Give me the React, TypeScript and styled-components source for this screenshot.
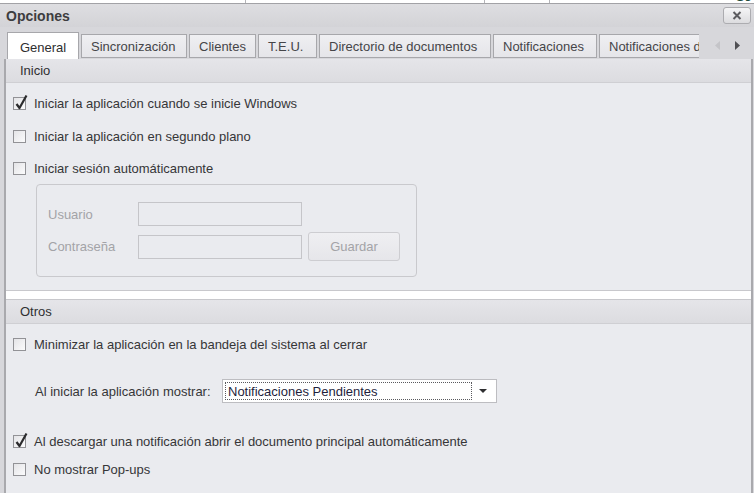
import React, { FC } from 'react'
import styled, { createGlobalStyle } from 'styled-components'

const GlobalStyle = createGlobalStyle`
  html, body {
    margin: 0;
    padding: 0;
    background: #ffffff;
  }
  body {
    font-family: "Liberation Sans", Arial, sans-serif;
    font-size: 13px;
    color: #383838;
  }
`

const Screen = styled.div`
  width: 754px;
  height: 493px;
  overflow: hidden;
  display: flex;
  flex-direction: column;
  background: #d7d7db;
`

const BackStrip = styled.div`
  height: 3px;
  display: flex;
  background: #ffffff;
  border-bottom: 1px solid #a2a2a6;
  overflow: hidden;
`

interface ICell {
    width?: number
}

const BackCell = styled.div<ICell>`
  width: ${(props) => (props.width ? `${props.width}px` : 'auto')};
  flex: ${(props) => (props.width ? 'none' : '1')};
  border-right: 1px solid #b4b4b8;
  &:last-child {
    border-right: none;
  }
`

const BackGlyph = styled.span`
  display: block;
  margin: -13px 0 0 187px;
  font: bold 17px "Liberation Serif", serif;
  color: #1d4a3b;
  line-height: 17px;
`

const TitleBar = styled.div`
  height: 23px;
  display: flex;
  align-items: center;
  justify-content: space-between;
  padding: 0 3px 0 6px;
  background: linear-gradient(#dedee1, #d3d3d7);
`

const Title = styled.span`
  font-weight: bold;
  font-size: 14px;
  color: #3d3d40;
`

const CloseButton = styled.div`
  width: 26px;
  height: 15px;
  border: 1px solid #acacb0;
  border-radius: 3px;
  background: linear-gradient(#f5f5f6, #dcdcdf);
  display: flex;
  align-items: center;
  justify-content: center;
`

const TabBar = styled.div`
  height: 32px;
  display: flex;
  align-items: flex-end;
  padding-left: 7px;
`

const TabList = styled.div`
  width: 692px;
  display: flex;
  align-items: flex-end;
  overflow: hidden;
`

interface ITab {
    active?: boolean,
    width: number
}

const Tab = styled.div<ITab>`
  flex: none;
  box-sizing: border-box;
  width: ${(props) => props.width}px;
  height: ${(props) => (props.active ? 27 : 24)}px;
  margin-left: ${(props) => (props.active ? 0 : 2)}px;
  margin-bottom: ${(props) => (props.active ? 0 : 1)}px;
  border: 1px solid #a7a7ab;
  border-bottom: ${(props) => (props.active ? 'none' : '1px solid #a7a7ab')};
  background: ${(props) => (props.active ? '#ffffff' : 'linear-gradient(#efeff2, #e5e5e9)')};
  color: ${(props) => (props.active ? '#2e2e30' : '#454548')};
  display: flex;
  align-items: center;
  justify-content: ${(props) => (props.active ? 'center' : 'flex-start')};
  padding-left: ${(props) => (props.active ? 0 : 9)}px;
  padding-top: ${(props) => (props.active ? 2 : 0)}px;
  white-space: nowrap;
  overflow: hidden;
`

const TabScroll = styled.div`
  flex: 1;
  height: 27px;
  display: flex;
  align-items: center;
  justify-content: space-around;
  padding: 0 6px 0 8px;
`

const Panel = styled.div`
  flex: 1;
  margin: 0 1px 0 4px;
  border-left: 2px solid #a9a9ad;
  border-right: 2px solid #a9a9ad;
  background: #eaebef;
  display: flex;
  flex-direction: column;
`

interface ISectionHeader {
    topBorder?: boolean
}

const SectionHeader = styled.div<ISectionHeader>`
  height: 23px;
  display: flex;
  align-items: center;
  padding-left: 14px;
  background: linear-gradient(#e5e5e9, #dcdce0);
  border-top: ${(props) => (props.topBorder ? '1px solid #c8c8cc' : 'none')};
  border-bottom: 1px solid #cfcfd3;
  color: #2f2f31;
`

interface ISectionBody {
    height?: number
}

const SectionBody = styled.div<ISectionBody>`
  display: flex;
  flex-direction: column;
  padding: 10px 0 0 7px;
  height: ${(props) => (props.height ? `${props.height - 10}px` : 'auto')};
  border-bottom: ${(props) => (props.height ? '1px solid #c8c8cc' : 'none')};
`

const Separator = styled.div`
  height: 8px;
  background: #ffffff;
`

interface IRow {
    marginTop?: number
}

const CheckRow = styled.label<IRow>`
  height: 20px;
  display: flex;
  align-items: center;
  gap: 8px;
  margin-top: ${(props) => props.marginTop || 0}px;
  color: #363638;
`

const Box = styled.span`
  width: 13px;
  height: 13px;
  box-sizing: border-box;
  border: 1px solid #929296;
  background: linear-gradient(135deg, #e4e4e7, #fbfbfc);
  position: relative;
`

const Tick = styled.svg`
  position: absolute;
  left: 0;
  top: -4px;
  overflow: visible;
`

const LoginBox = styled.div`
  width: 381px;
  height: 93px;
  box-sizing: border-box;
  margin: 6px 0 0 23px;
  border: 1px solid #c9c9cd;
  border-radius: 4px;
  padding: 17px 0 0 11px;
  display: flex;
  flex-direction: column;
  gap: 6px;
`

const FieldRow = styled.div`
  display: flex;
  align-items: center;
`

const FieldLabel = styled.span`
  width: 90px;
  color: #a3a3a7;
`

const Input = styled.div`
  width: 164px;
  height: 24px;
  box-sizing: border-box;
  border: 1px solid #c5c5c9;
  background: #eaebef;
`

const DisabledButton = styled.div`
  width: 92px;
  height: 29px;
  box-sizing: border-box;
  margin-left: 6px;
  border: 1px solid #cdcdd1;
  border-radius: 3px;
  background: linear-gradient(#efeff2, #e6e6ea);
  color: #a3a3a7;
  display: flex;
  align-items: center;
  justify-content: center;
`

const ComboRow = styled.div`
  display: flex;
  align-items: center;
  margin: 25px 0 0 22px;
`

const ComboLabel = styled.span`
  width: 187px;
  color: #363638;
`

const Combo = styled.div`
  width: 275px;
  height: 24px;
  box-sizing: border-box;
  border: 1px solid #bdbdc1;
  background: #ffffff;
  display: flex;
  align-items: center;
  padding: 2px;
`

const ComboText = styled.div`
  flex: 1;
  height: 100%;
  box-sizing: border-box;
  border: 1px dotted #5a5a5e;
  display: flex;
  align-items: center;
  padding-left: 2px;
  color: #1e1e3c;
`

const ComboArrow = styled.div`
  width: 22px;
  display: flex;
  justify-content: center;
`

interface ICheck {
    label: string,
    checked?: boolean,
    marginTop?: number
}

const Check: FC<ICheck> = ({ label, checked, marginTop }) => (
    <CheckRow marginTop={marginTop}>
        <Box>
            {checked && (
                <Tick width="14" height="16" viewBox="0 0 14 16">
                    <path d="M2.5 10 L5.5 14 L12.5 1.5" fill="none" stroke="#2b2b2d" strokeWidth="2.2" strokeLinejoin="round" />
                </Tick>
            )}
        </Box>
        <span>{label}</span>
    </CheckRow>
)

const tabs = [
    { title: 'Sincronización', width: 106 },
    { title: 'Clientes', width: 67 },
    { title: 'T.E.U.', width: 59 },
    { title: 'Directorio de documentos', width: 172 },
    { title: 'Notificaciones', width: 104 },
    { title: 'Notificaciones de correo', width: 160 }
]

const App: FC = () => (
    <>
        <GlobalStyle />
        <Screen>
            <BackStrip>
                <BackCell width={245} />
                <BackCell width={238} />
                <BackCell width={64} />
                <BackCell>
                    <BackGlyph>K</BackGlyph>
                </BackCell>
            </BackStrip>
            <TitleBar>
                <Title>Opciones</Title>
                <CloseButton>
                    <svg width="10" height="9" viewBox="0 0 10 9">
                        <path d="M1.5 1 L8.5 8 M8.5 1 L1.5 8" stroke="#5c5c60" strokeWidth="2" />
                    </svg>
                </CloseButton>
            </TitleBar>
            <TabBar>
                <TabList>
                    <Tab active width={72}>General</Tab>
                    {tabs.map((tab) => (
                        <Tab key={tab.title} width={tab.width}>{tab.title}</Tab>
                    ))}
                </TabList>
                <TabScroll>
                    <svg width="5" height="9" viewBox="0 0 5 9">
                        <path d="M5 0 L0 4.5 L5 9 Z" fill="#c4c4c8" />
                    </svg>
                    <svg width="5" height="9" viewBox="0 0 5 9">
                        <path d="M0 0 L5 4.5 L0 9 Z" fill="#505054" />
                    </svg>
                </TabScroll>
            </TabBar>
            <Panel>
                <SectionHeader>Inicio</SectionHeader>
                <SectionBody height={207}>
                    <Check checked label="Iniciar la aplicación cuando se inicie Windows" />
                    <Check marginTop={13} label="Iniciar la aplicación en segundo plano" />
                    <Check marginTop={12} label="Iniciar sesión automáticamente" />
                    <LoginBox>
                        <FieldRow>
                            <FieldLabel>Usuario</FieldLabel>
                            <Input />
                        </FieldRow>
                        <FieldRow>
                            <FieldLabel>Contraseña</FieldLabel>
                            <Input />
                            <DisabledButton>Guardar</DisabledButton>
                        </FieldRow>
                    </LoginBox>
                </SectionBody>
                <Separator />
                <SectionHeader topBorder>Otros</SectionHeader>
                <SectionBody>
                    <Check label="Minimizar la aplicación en la bandeja del sistema al cerrar" />
                    <ComboRow>
                        <ComboLabel>Al iniciar la aplicación mostrar:</ComboLabel>
                        <Combo>
                            <ComboText>Notificaciones Pendientes</ComboText>
                            <ComboArrow>
                                <svg width="8" height="4" viewBox="0 0 8 4">
                                    <path d="M0 0 L8 0 L4 4 Z" fill="#2e2e30" />
                                </svg>
                            </ComboArrow>
                        </Combo>
                    </ComboRow>
                    <Check checked marginTop={28} label="Al descargar una notificación abrir el documento principal automáticamente" />
                    <Check marginTop={8} label="No mostrar Pop-ups" />
                </SectionBody>
            </Panel>
        </Screen>
    </>
)

export default App
